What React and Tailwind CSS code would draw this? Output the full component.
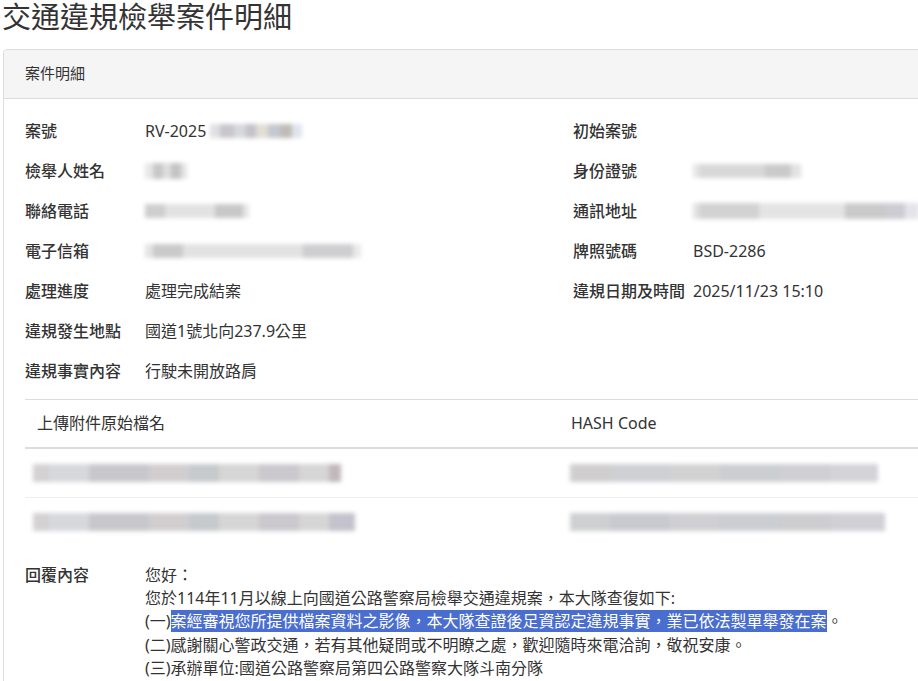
import React from 'react';

// Pixelated blur standing in for redacted personal data.
const Redacted = ({ segs, h = 14 }) => (
  <div className="flex blur-[2px]" style={{ height: h }}>
    {segs.map(([w, c], i) => (
      <div key={i} style={{ width: w, backgroundColor: c }} />
    ))}
  </div>
);

const Field = ({ label, children }) => (
  <div className="flex h-[40px] items-center">
    <div className="w-[120px] shrink-0 font-medium">{label}</div>
    <div className="flex items-center">{children}</div>
  </div>
);

export default function App() {
  const leftRows = [
    ['案號', <><span>RV-2025</span><div className="ml-[4px]"><Redacted segs={[[10, '#e0e0e4'], [14, '#c8c6cc'], [12, '#d6d8de'], [10, '#c2c2c8'], [12, '#e2ddd6'], [12, '#c4c8d0'], [12, '#bfbcb8'], [10, '#dfe4ee']]} /></div></>],
    ['檢舉人姓名', <Redacted h={16} segs={[[8, '#e8e8e8'], [10, '#c8c8c8'], [8, '#dedede'], [10, '#c4c4c4'], [6, '#e4e4e4']]} />],
    ['聯絡電話', <Redacted h={14} segs={[[20, '#cecece'], [50, '#e2e2e2'], [28, '#c8c8c8'], [6, '#e6e6e6']]} />],
    ['電子信箱', <Redacted h={14} segs={[[8, '#e4e4e4'], [30, '#cacaca'], [120, '#e2e2e2'], [50, '#ceced0'], [8, '#eaeaea']]} />],
    ['處理進度', '處理完成結案'],
    ['違規發生地點', '國道1號北向237.9公里'],
    ['違規事實內容', '行駛未開放路肩'],
  ];
  const rightRows = [
    ['初始案號', ''],
    ['身份證號', <Redacted h={14} segs={[[6, '#e6e6e6'], [66, '#d8d8d8'], [26, '#cacaca'], [10, '#e2e2e2']]} />],
    ['通訊地址', <Redacted h={16} segs={[[6, '#e2e2e2'], [60, '#d2d2d2'], [86, '#e4e4e4'], [40, '#cacaca'], [20, '#ccccd2'], [14, '#e4e4ea']]} />],
    ['牌照號碼', 'BSD-2286'],
    ['違規日期及時間', '2025/11/23 15:10'],
  ];

  return (
    <div
      className="w-[918px] h-[681px] overflow-hidden bg-white text-[#333] text-[16px] leading-[1.42857]"
      style={{ fontFamily: '"Noto Sans", "Noto Sans CJK TC", sans-serif' }}
    >
      <h1 className="pl-[2px] pt-[1px] text-[29px] leading-[31px] font-normal">交通違規檢舉案件明細</h1>

      <div className="ml-[3px] mt-[17px] w-[1140px] border border-[#ddd] rounded-[4px]">
        <div className="h-[49px] bg-[#f5f5f5] border-b border-[#ddd] rounded-t-[4px] px-[21px] flex items-center text-[15px]">
          案件明細
        </div>

        <div className="px-[21px] pt-[12px] pb-[40px]">
          <div className="grid grid-cols-2">
            <div>
              {leftRows.map(([l, v]) => (
                <Field key={l} label={l}>{v}</Field>
              ))}
            </div>
            <div>
              {rightRows.map(([l, v]) => (
                <Field key={l} label={l}>{v}</Field>
              ))}
            </div>
          </div>

          <div className="mt-[8px] border-t border-[#ddd]">
            <div className="grid grid-cols-[534px_1fr] h-[49px] items-center border-b-2 border-[#ddd]">
              <div className="pl-[12px]">上傳附件原始檔名</div>
              <div className="pl-[12px]">HASH Code</div>
            </div>
            <div className="grid grid-cols-[534px_1fr] h-[48px] items-center">
              <div className="pl-[8px]">
                <Redacted h={18} segs={[[16, '#d4d2d2'], [40, '#d6d8dc'], [60, '#c8c8cc'], [40, '#d2ced0'], [30, '#c6cacc'], [40, '#d6d6d6'], [40, '#cbc8ce'], [30, '#d6d6d6'], [12, '#c2b8bc']]} />
              </div>
              <div className="pl-[11px]">
                <Redacted h={18} segs={[[40, '#d0cece'], [60, '#ced0d4'], [50, '#d2d2d2'], [60, '#cbced2'], [50, '#d0d0d4'], [48, '#d4d4d8']]} />
              </div>
            </div>
            <div className="grid grid-cols-[534px_1fr] h-[48px] items-center border-t border-[#eee]">
              <div className="pl-[8px]">
                <Redacted h={18} segs={[[16, '#d4d2d2'], [40, '#d6d8dc'], [60, '#c8c8cc'], [40, '#d2ced0'], [30, '#c6cacc'], [40, '#d6d6d6'], [40, '#cbc8ce'], [30, '#d6d6d6'], [26, '#c4c2cc']]} />
              </div>
              <div className="pl-[11px]">
                <Redacted h={18} segs={[[40, '#ced0d2'], [60, '#c8cad0'], [50, '#d0d0d4'], [60, '#cbced2'], [50, '#cecdd0'], [55, '#d0d0d6']]} />
              </div>
            </div>
          </div>

          <div className="mt-[19px] flex leading-[23.2px]">
            <div className="w-[120px] shrink-0 font-medium">回覆內容</div>
            <div>
              <div>您好：</div>
              <div>您於114年11月以線上向國道公路警察局檢舉交通違規案，本大隊查復如下:</div>
              <div>
                (一)<span className="bg-[#4a6dd0] text-white">案經審視您所提供檔案資料之影像，本大隊查證後足資認定違規事實，業已依法製單舉發在案</span>。
              </div>
              <div>(二)感謝關心警政交通，若有其他疑問或不明瞭之處，歡迎隨時來電洽詢，敬祝安康。</div>
              <div>(三)承辦單位:國道公路警察局第四公路警察大隊斗南分隊</div>
            </div>
          </div>
        </div>
      </div>
    </div>
  );
}
